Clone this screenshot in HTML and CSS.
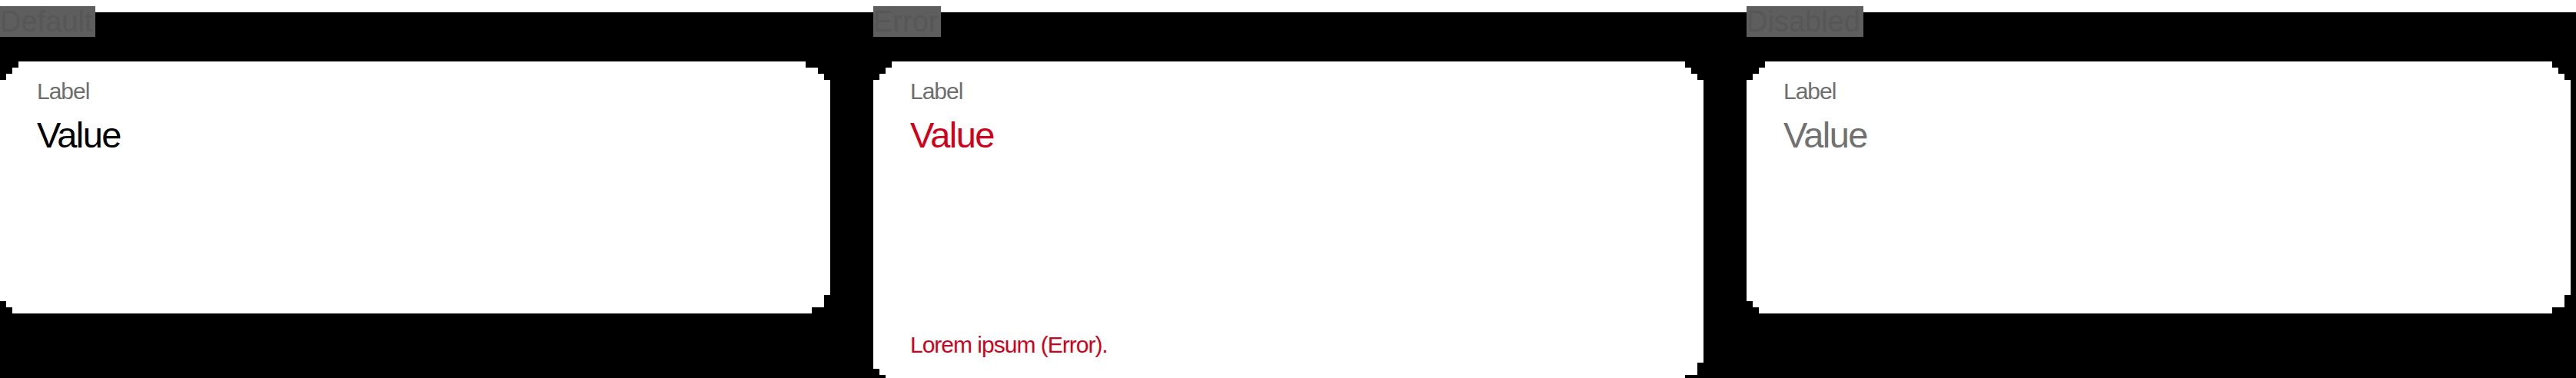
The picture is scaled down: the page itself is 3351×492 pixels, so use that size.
FILE: index.html
```html
<!DOCTYPE html>
<html lang="en">
<head>
<meta charset="utf-8">
<title>Text field states</title>
<link rel="stylesheet" href="styles.css">
</head>
<body>
<main class="board">
  <section class="state">
    <h2 class="state-title">Default</h2>
    <div class="field field-first">
      <div class="field-label">Label</div>
      <div class="field-value">Value</div>
    </div>
  </section>
  <section class="state">
    <h2 class="state-title">Error</h2>
    <div class="field field-error">
      <div class="field-label">Label</div>
      <div class="field-value">Value</div>
      <div class="field-message">Lorem ipsum (Error).</div>
    </div>
  </section>
  <section class="state">
    <h2 class="state-title">Disabled</h2>
    <div class="field field-disabled">
      <div class="field-label">Label</div>
      <div class="field-value">Value</div>
    </div>
  </section>
</main>
</body>
</html>
```
FILE: styles.css
```css
html, body {
  margin: 0;
  padding: 0;
  background: #ffffff;
}

body {
  font-family: "Liberation Sans", Arial, sans-serif;
  overflow: hidden;
}

.board {
  margin-top: 16px;
  min-height: 476px;
  background: #000000;
  display: grid;
  grid-template-columns: 1080px 1080px 1072px;
  column-gap: 56px;
  align-items: start;
}

.state {
  display: flex;
  flex-direction: column;
  align-items: flex-start;
}

.state-title {
  margin: -8px 0 0 0;
  height: 40px;
  font-size: 38px;
  line-height: 40px;
  font-weight: normal;
  background: #5e5e5e;
  color: #575757;
  white-space: nowrap;
  padding-right: 4px;
}

.field {
  align-self: stretch;
  margin-top: 32px;
  background: #ffffff;
  padding: 24px 48px 24px 48px;
  display: flex;
  flex-direction: column;
  clip-path: polygon(
    24px 0, calc(100% - 24px) 0,
    calc(100% - 24px) 8px, calc(100% - 16px) 8px,
    calc(100% - 16px) 16px, calc(100% - 8px) 16px,
    calc(100% - 8px) 24px, 100% 24px,
    100% calc(100% - 24px), calc(100% - 8px) calc(100% - 24px),
    calc(100% - 8px) calc(100% - 8px), calc(100% - 24px) calc(100% - 8px),
    calc(100% - 24px) 100%, 16px 100%,
    16px calc(100% - 8px), 8px calc(100% - 8px),
    8px calc(100% - 16px), 0 calc(100% - 16px),
    0 24px, 8px 24px,
    8px 16px, 16px 16px,
    16px 8px, 24px 8px
  );
}

.field-first {
  clip-path: polygon(
    24px 0, calc(100% - 32px) 0,
    calc(100% - 32px) 8px, calc(100% - 16px) 8px,
    calc(100% - 16px) 16px, calc(100% - 8px) 16px,
    calc(100% - 8px) 24px, 100% 24px,
    100% calc(100% - 24px), calc(100% - 8px) calc(100% - 24px),
    calc(100% - 8px) calc(100% - 8px), calc(100% - 24px) calc(100% - 8px),
    calc(100% - 24px) 100%, 16px 100%,
    16px calc(100% - 8px), 8px calc(100% - 8px),
    8px calc(100% - 16px), 0 calc(100% - 16px),
    0 24px, 8px 24px,
    8px 16px, 16px 16px,
    16px 8px, 24px 8px
  );
}

.field-label {
  font-size: 30px;
  line-height: 30px;
  height: 30px;
  color: #6e6e6e;
  letter-spacing: -1px;
}

.field-value {
  margin-top: 18px;
  font-size: 47px;
  line-height: 47px;
  height: 232px;
  color: #000000;
  letter-spacing: -1.6px;
}

.field-error .field-value {
  color: #d0021b;
}

.field-disabled .field-value {
  color: #717171;
}

.field-message {
  margin-top: 50px;
  margin-bottom: 8px;
  font-size: 30px;
  line-height: 30px;
  color: #d0021b;
  letter-spacing: -1px;
}
```
